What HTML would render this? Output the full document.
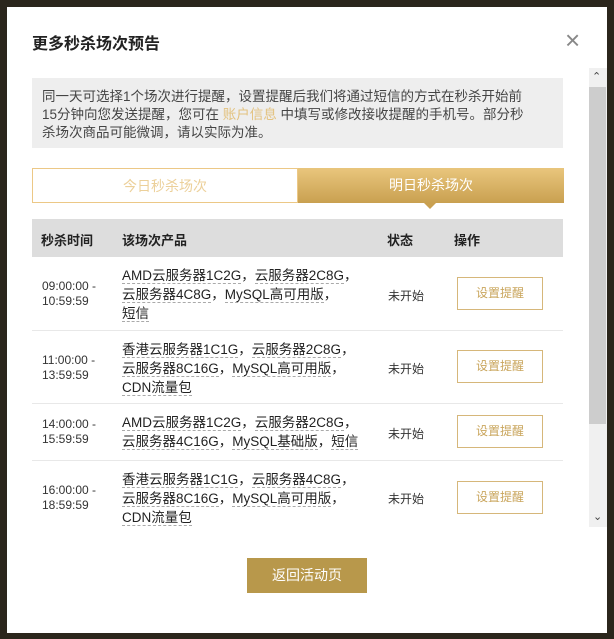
<!DOCTYPE html>
<html><head><meta charset="utf-8"><style>
*{margin:0;padding:0;box-sizing:border-box}
body{width:614px;height:639px;background:#2b261c;position:relative;overflow:hidden;font-family:"Liberation Sans","Noto Sans CJK SC",sans-serif;color:#333}
.m{position:absolute;left:7px;top:7px;width:600px;height:626px;background:#fff}
.t{position:absolute;left:32px;top:30px;font-size:16px;font-weight:bold;color:#222}
.x{position:absolute;left:565px;top:27px;font-size:26px;color:#888;line-height:26px}
.n{position:absolute;left:32px;top:78px;width:531px;height:70px;background:#eee;padding:10px 32px 9px 10px;font-size:13.5px;line-height:18px;color:#444}
.n span{color:#e3c27e}
.tab{position:absolute;top:168px;height:35px;width:266px;font-size:14px;text-align:center;line-height:35px}
.t1{left:32px;border:1px solid #ecc886;color:#ecd09a;background:#fff}
.t2{left:298px;background:linear-gradient(#e9c67d,#c9a050);color:#fff}
.arr{position:absolute;left:424px;top:203px;border:6px solid transparent;border-top-color:#c9a050;border-bottom:0}
.tb{position:absolute;left:32px;top:219px;width:531px;height:308px;overflow:hidden}
.h{height:38px;background:#ddd;font-size:13px;font-weight:bold;color:#222;position:relative}
.h div,.r div{position:absolute}
.r{position:relative;border-bottom:1px solid #e8e8e8;font-size:12px}
.r .tm{left:10px;line-height:15px}
.r .p{left:90px;font-size:13.5px;line-height:19px;color:#222}
.p u{text-decoration:none;border-bottom:1px dashed #aaa}
.r .s{left:356px}
.r .b{left:425px;width:86px;height:33px;border:1px solid #d6b77a;color:#c9a55c;font-size:12px;text-align:center;line-height:31px}
.sb{position:absolute;left:589px;top:68px;width:18px;height:459px;background:#f0f0f0}
.th{position:absolute;left:589px;top:87px;width:17px;height:337px;background:#cdcdcd}
.btn{position:absolute;left:247px;top:558px;width:120px;height:35px;background:#b8984b;color:#fff;font-size:14px;text-align:center;line-height:35px}
</style></head><body>
<div class="m"></div>
<div class="t">更多秒杀场次预告</div>
<div class="x">×</div>
<div class="n">同一天可选择1个场次进行提醒，设置提醒后我们将通过短信的方式在秒杀开始前15分钟向您发送提醒，您可在 <span>账户信息</span> 中填写或修改接收提醒的手机号。部分秒杀场次商品可能微调，请以实际为准。</div>
<div class="tab t1">今日秒杀场次</div>
<div class="tab t2">明日秒杀场次</div>
<div class="arr"></div>
<div class="tb">
<div class="h"><div style="left:9px;top:11px">秒杀时间</div><div style="left:90px;top:11px">该场次产品</div><div style="left:355px;top:11px">状态</div><div style="left:422px;top:11px">操作</div></div>
<div class="r" style="height:74px"><div class="tm" style="top:22px">09:00:00 -<br>10:59:59</div><div class="p" style="top:9px"><u>AMD云服务器1C2G</u>，<u>云服务器2C8G</u>，<br><u>云服务器4C8G</u>，<u>MySQL高可用版</u>，<br><u>短信</u></div><div class="s" style="top:30px">未开始</div><div class="b" style="top:20px">设置提醒</div></div>
<div class="r" style="height:73px"><div class="tm" style="top:22px">11:00:00 -<br>13:59:59</div><div class="p" style="top:9px"><u>香港云服务器1C1G</u>，<u>云服务器2C8G</u>，<br><u>云服务器8C16G</u>，<u>MySQL高可用版</u>，<br><u>CDN流量包</u></div><div class="s" style="top:29px">未开始</div><div class="b" style="top:19px">设置提醒</div></div>
<div class="r" style="height:57px"><div class="tm" style="top:13px">14:00:00 -<br>15:59:59</div><div class="p" style="top:9px"><u>AMD云服务器1C2G</u>，<u>云服务器2C8G</u>，<br><u>云服务器4C16G</u>，<u>MySQL基础版</u>，<u>短信</u></div><div class="s" style="top:21px">未开始</div><div class="b" style="top:11px">设置提醒</div></div>
<div class="r" style="height:74px"><div class="tm" style="top:22px">16:00:00 -<br>18:59:59</div><div class="p" style="top:9px"><u>香港云服务器1C1G</u>，<u>云服务器4C8G</u>，<br><u>云服务器8C16G</u>，<u>MySQL高可用版</u>，<br><u>CDN流量包</u></div><div class="s" style="top:29px">未开始</div><div class="b" style="top:20px">设置提醒</div></div>
</div>
<div class="sb"></div><div class="th"></div>
<div style="position:absolute;left:592px;top:70px;font-size:11px;color:#444">&#8963;</div>
<div style="position:absolute;left:593px;top:510px;font-size:11px;color:#444">&#8964;</div>
<div class="btn">返回活动页</div>
</body></html>
